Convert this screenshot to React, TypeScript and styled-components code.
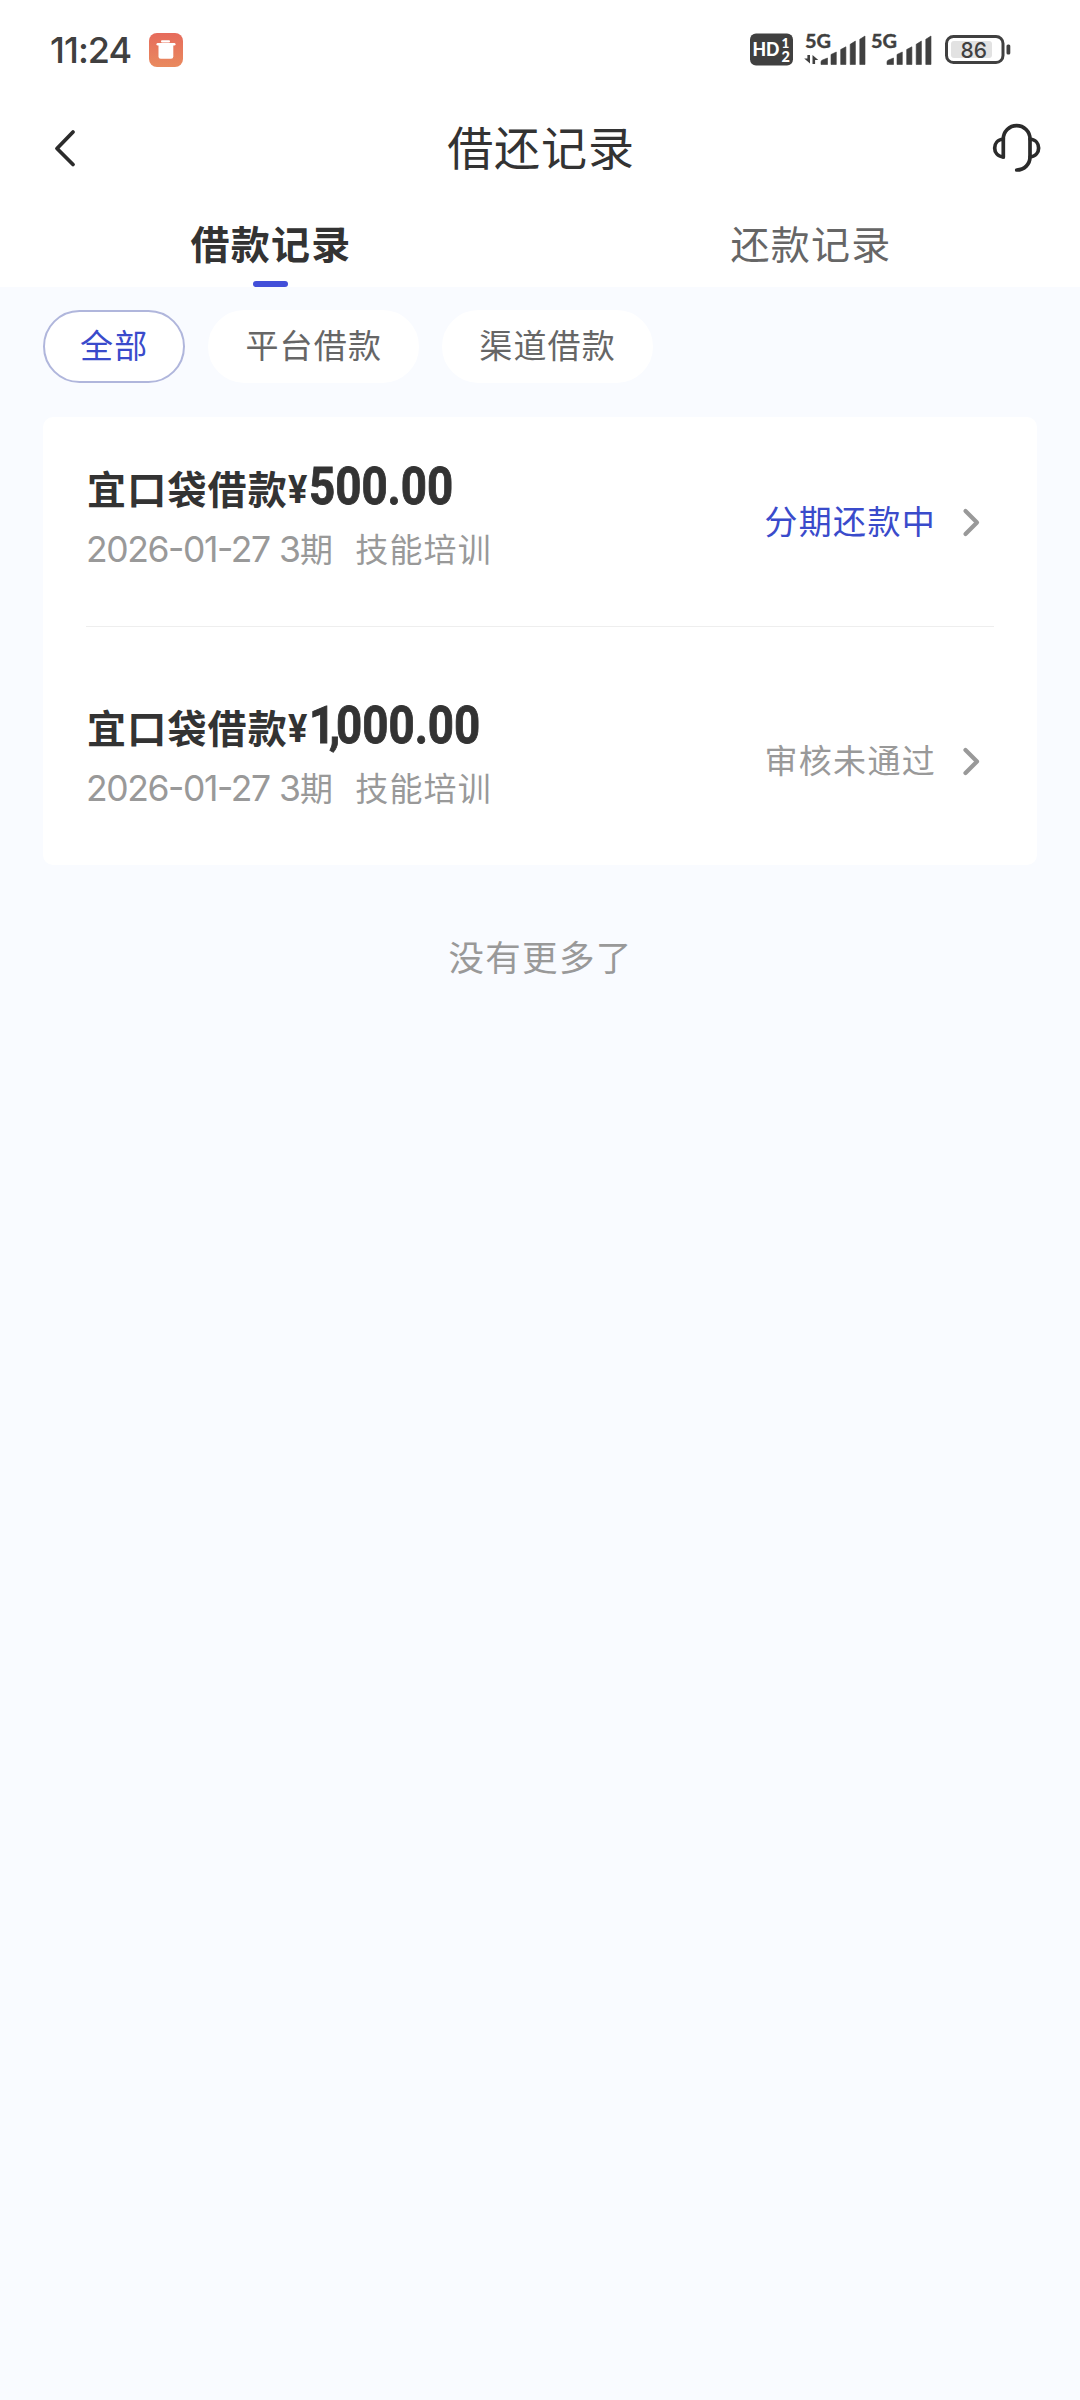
import React from "react";
import styled, { createGlobalStyle } from "styled-components";

const GlobalStyle = createGlobalStyle`
  * { box-sizing: border-box; }
  html, body { margin: 0; padding: 0; background: #f9fbff; }
  body { font-family: Inter, "Noto Sans CJK SC", sans-serif; color: #333; }
`;

const cjk = `"Noto Sans CJK SC", sans-serif`;

const Screen = styled.div`
  display: flex;
  flex-direction: column;
  width: 1080px;
  height: 2400px;
  overflow: hidden;
  background: #f9fbff;
`;

const Top = styled.header`
  display: flex;
  flex-direction: column;
  height: 287px;
  background: #fff;
`;

const StatusBar = styled.div`
  display: flex;
  align-items: center;
  height: 100px;
  padding: 0 69px 0 50px;
`;

const Clock = styled.span`
  width: 98px;
  font-size: 36px;
  font-weight: 500;
  letter-spacing: -1px;
  line-height: 40px;
  white-space: nowrap;
  color: #404040;
`;

const StatusIcons = styled.div`
  display: flex;
  align-items: center;
  margin-left: auto;
`;

const NavBar = styled.div`
  display: grid;
  grid-template-columns: 160px 1fr 160px;
  align-items: center;
  height: 96px;
`;

const NavTitle = styled.h1`
  margin: 0;
  padding: 0 0 7px 2px;
  text-align: center;
  font: 400 46px/60px ${cjk};
  letter-spacing: 0.9px;
  color: #333;
`;

const NavButton = styled.button<{ $end?: boolean }>`
  display: flex;
  justify-content: ${(p) => (p.$end ? "flex-end" : "flex-start")};
  padding: ${(p) => (p.$end ? "0 38px 0 0" : "0 0 0 52px")};
  border: 0;
  background: none;
`;

const Tabs = styled.nav`
  display: grid;
  grid-template-columns: 1fr 1fr;
  flex: 1;
`;

const Tab = styled.div<{ $active?: boolean }>`
  display: flex;
  flex-direction: column;
  align-items: center;
  justify-content: space-between;
  padding-top: 18px;
  font: ${(p) => (p.$active ? 700 : 400)} 39px/56px ${cjk};
  letter-spacing: 1.2px;
  color: ${(p) => (p.$active ? "#333" : "#666")};
`;

const TabLabel = styled.span`
  padding-left: 2px;
`;

const TabMark = styled.span`
  width: 35px;
  height: 6px;
  border-radius: 3px;
  background: #424fd9;
`;

const Filters = styled.div`
  display: flex;
  gap: 23px;
  padding: 23px 43px 0;
`;

const Chip = styled.button<{ $active?: boolean }>`
  height: 73px;
  padding: 0 35px 4px 35px;
  border: 2px solid ${(p) => (p.$active ? "#b0b6dc" : "#fff")};
  border-radius: 37px;
  background: #fff;
  font: 400 33px/65px ${cjk};
  letter-spacing: 1.2px;
  color: ${(p) => (p.$active ? "#3a4bcb" : "#666")};
`;

const Card = styled.section`
  display: flex;
  flex-direction: column;
  margin: 34px 43px 0;
  padding: 0 43px;
  border-radius: 10px;
  background: #fff;
`;

const Record = styled.article`
  display: flex;
  align-items: center;
  justify-content: space-between;
  height: 209px;
  & + & {
    height: 239px;
    padding-top: 29px;
    border-top: 1px solid #eee;
  }
`;

const Info = styled.div`
  display: flex;
  flex-direction: column;
  margin-top: -14px;
`;

const RecordTitle = styled.div`
  display: flex;
  align-items: baseline;
  height: 60px;
  padding-left: 1px;
  font: 700 39px/60px ${cjk};
  letter-spacing: 1.2px;
  white-space: nowrap;
`;

const Yen = styled.span`
  width: 21px;
  font: 700 38px/56px Roboto, sans-serif;
  letter-spacing: 0;
  transform: scaleX(0.95) translateY(-1px);
  transform-origin: left;
`;

const Amount = styled.span`
  transform: scaleX(0.87);
  transform-origin: left;
  font: 700 52.5px/60px Roboto, sans-serif;
  letter-spacing: 0;
  -webkit-text-stroke: 0.9px #333;
`;

const LeadingDigit = styled.span`
  letter-spacing: -7px;
`;

const Separator = styled.span`
  letter-spacing: -5px;
`;

const Meta = styled.div`
  display: flex;
  align-items: baseline;
  height: 50px;
  margin-top: 7px;
  line-height: 50px;
  color: #999;
  white-space: nowrap;
`;

const Digits = styled.span<{ $w: number }>`
  width: ${(p) => p.$w}px;
  font-family: Inter, sans-serif;
  font-size: 35.5px;
  font-weight: 400;
  letter-spacing: -1.4px;
  font-feature-settings: "case" 1;
`;

const MetaText = styled.span`
  margin-right: 21px;
  font: 400 33px/50px ${cjk};
  letter-spacing: 1.2px;
`;

const Status = styled.div<{ $active?: boolean }>`
  display: flex;
  align-items: center;
  gap: 25px;
  padding-right: 13px;
  font: 400 33px/50px ${cjk};
  letter-spacing: 1.3px;
  color: ${(p) => (p.$active ? "#3a4bcb" : "#999")};
`;

const StatusText = styled.span`
  padding-bottom: 3px;
`;

const End = styled.p`
  margin: 64px 0 0;
  padding-left: 1px;
  text-align: center;
  font: 400 35.5px/54px ${cjk};
  letter-spacing: 1.3px;
  color: #999;
`;

function TrashBadge() {
  return (
    <svg width="36" height="36" viewBox="0 0 36 36">
      <defs>
        <linearGradient id="trash" x1="0" y1="0" x2="0" y2="1">
          <stop offset="0" stopColor="#e66b5c" />
          <stop offset="1" stopColor="#e98a5e" />
        </linearGradient>
      </defs>
      <rect x="1" y="1" width="34" height="34" rx="8" fill="url(#trash)" />
      <rect x="13" y="8.2" width="9" height="2.4" rx="1" fill="#fff" />
      <rect x="8.5" y="11" width="19" height="2.6" rx="1.3" fill="#fff" />
      <path d="M10.500 13h14.800v11.500q0 2.200-2.200 2.200h-10.400q-2.200 0-2.200-2.200z" fill="#fff" />
    </svg>
  );
}

const bars = [
  "M0 44.500V42q0-1.500 1.500-2l5-2v6.500z",
  "M10 44.500V34.500l5.300-2.500v12.500z",
  "M19.700 44.500V29.500l5.200-2.700v17.700z",
  "M29.200 44.500V24.300l5.200-3.200v23.400z",
  "M38.800 44.500V19.300l5.200-3.300v28.500z",
];

function SignalBars({ x }: { x: number }) {
  return (
    <g transform={`translate(${x} 0)`} fill="#404040" stroke="#404040" strokeWidth=".6" strokeLinejoin="round">
      {bars.map((d) => (
        <path key={d} d={d} />
      ))}
    </g>
  );
}

function Network() {
  return (
    <svg width="261" height="60" viewBox="0 0 261 60" fontFamily="Lato, sans-serif">
      <rect x="0" y="13.500" width="43" height="32" rx="6" fill="#404040" />
      <text x="2.500" y="36" fontSize="18.500" fontWeight="900" fill="#fff" textLength="27" lengthAdjust="spacingAndGlyphs">HD</text>
      <text x="31.500" y="27.500" fontSize="13.500" fontWeight="900" fill="#fff">1</text>
      <text x="31.500" y="41.500" fontSize="14.500" fontWeight="900" fill="#fff">2</text>
      <text x="55" y="28" fontSize="19.500" fontWeight="700" fill="#404040" stroke="#404040" strokeWidth=".4" textLength="26" lengthAdjust="spacingAndGlyphs">5G</text>
      <text x="121" y="28" fontSize="19.500" fontWeight="700" fill="#404040" stroke="#404040" strokeWidth=".4" textLength="26" lengthAdjust="spacingAndGlyphs">5G</text>
      <path d="M60 35v8.500L54.200 38.500h3.200V35zM62.500 44V35l5.800 5h-3.200v4z" fill="#404040" />
      <SignalBars x={71} />
      <SignalBars x={137} />
      <rect x="196.500" y="16.500" width="56.500" height="26" rx="7" fill="none" stroke="#404040" strokeWidth="3" />
      <rect x="201" y="21" width="41" height="17" rx="3" fill="#e2e2e2" />
      <rect x="256.500" y="24.500" width="3.800" height="10" rx="1.500" fill="#404040" />
      <text x="210.500" y="37.500" fontFamily="Inter, sans-serif" fontSize="22" fontWeight="500" fill="#404040" textLength="26.500" lengthAdjust="spacingAndGlyphs">86</text>
    </svg>
  );
}

function BackIcon() {
  return (
    <svg width="26" height="40" viewBox="0 0 26 40" fill="none" stroke="#2b2b2b" strokeWidth="3.800" strokeLinecap="round" strokeLinejoin="round">
      <path d="M21 4L5 20.500L21 36.500" />
    </svg>
  );
}

function HeadsetIcon() {
  return (
    <svg width="50" height="52" viewBox="0 0 50 52" fill="none" stroke="#2b2b2b" strokeWidth="3.700" strokeLinecap="round" strokeLinejoin="round">
      <path d="M11.300 35V16.900a13.350 13.350 0 0 1 26.700 0V35C38 42 32.500 48 24.700 48" />
      <path d="M11.300 17C-.2 18 -.2 34 11.300 35" />
      <path d="M38 17C49.500 18 49.500 34 38 35" />
    </svg>
  );
}

function Chevron() {
  return (
    <svg width="20" height="32" viewBox="0 0 20 32" fill="none" stroke="#999" strokeWidth="4.200" strokeLinecap="round" strokeLinejoin="round">
      <path d="M4.500 5L16 16.500L4.500 28" />
    </svg>
  );
}

function Money({ value }: { value: string }) {
  const [lead, rest] = value.split(",");
  if (!rest) return <Amount>{value}</Amount>;
  return (
    <Amount>
      <LeadingDigit>{lead}</LeadingDigit>
      <Separator>,</Separator>
      {rest}
    </Amount>
  );
}

const records = [
  { amount: "500.00", status: "分期还款中", active: true },
  { amount: "1,000.00", status: "审核未通过", active: false },
];

export default function App() {
  return (
    <Screen>
      <GlobalStyle />
      <Top>
        <StatusBar>
          <Clock>11:24</Clock>
          <TrashBadge />
          <StatusIcons>
            <Network />
          </StatusIcons>
        </StatusBar>
        <NavBar>
          <NavButton aria-label="返回"><BackIcon /></NavButton>
          <NavTitle>借还记录</NavTitle>
          <NavButton $end aria-label="客服"><HeadsetIcon /></NavButton>
        </NavBar>
        <Tabs>
          <Tab $active><TabLabel>借款记录</TabLabel><TabMark /></Tab>
          <Tab><TabLabel>还款记录</TabLabel></Tab>
        </Tabs>
      </Top>
      <Filters>
        <Chip $active>全部</Chip>
        <Chip>平台借款</Chip>
        <Chip>渠道借款</Chip>
      </Filters>
      <Card>
        {records.map((r) => (
          <Record key={r.status}>
            <Info>
              <RecordTitle>
                宜口袋借款<Yen>¥</Yen>
                <Money value={r.amount} />
              </RecordTitle>
              <Meta>
                <Digits $w={193}>2026-01-27</Digits>
                <Digits $w={21}>3</Digits>
                <MetaText>期</MetaText>
                <MetaText>技能培训</MetaText>
              </Meta>
            </Info>
            <Status $active={r.active}><StatusText>{r.status}</StatusText><Chevron /></Status>
          </Record>
        ))}
      </Card>
      <End>没有更多了</End>
    </Screen>
  );
}
